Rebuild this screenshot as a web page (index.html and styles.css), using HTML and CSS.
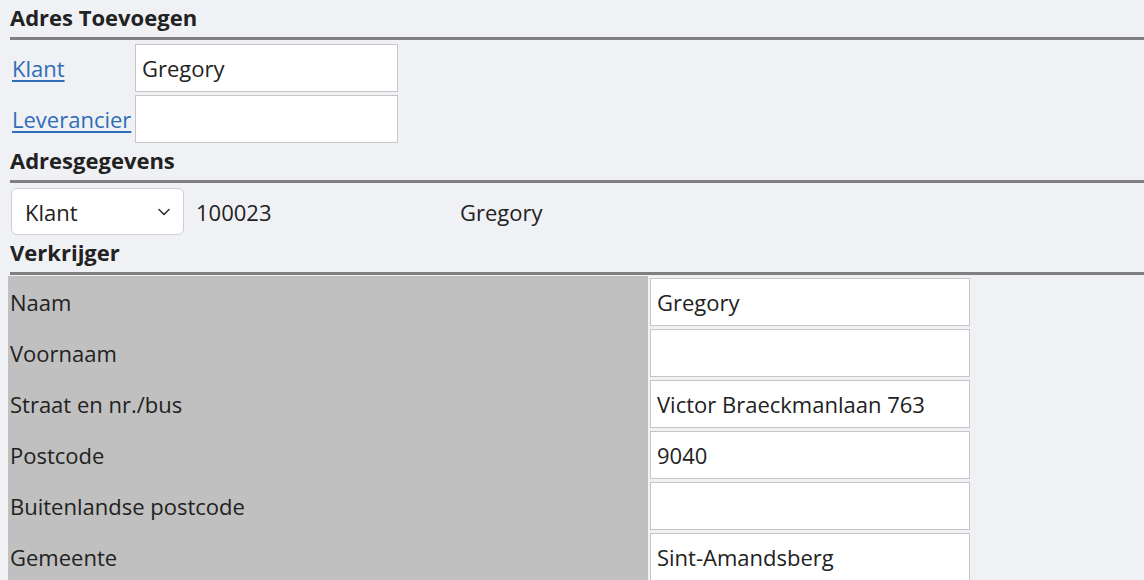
FILE: index.html
```html
<!DOCTYPE html>
<html lang="nl">
<head>
<meta charset="utf-8">
<title>Adres Toevoegen</title>
<link rel="stylesheet" href="styles.css">
</head>
<body>
<div class="page">
  <h2 class="section-title">Adres Toevoegen</h2>
  <table class="lookup">
    <tr>
      <td class="lookup-label"><a href="#" class="link">Klant</a></td>
      <td class="lookup-field"><input class="text-input lookup-input" type="text" value="Gregory"></td>
    </tr>
    <tr>
      <td class="lookup-label"><a href="#" class="link">Leverancier</a></td>
      <td class="lookup-field"><input class="text-input lookup-input" type="text" value=""></td>
    </tr>
  </table>

  <h2 class="section-title">Adresgegevens</h2>
  <div class="address-row">
    <div class="select-cell">
      <div class="select">
        <span>Klant</span>
        <svg class="chevron" width="12" height="8" viewBox="0 0 12 8"><path d="M1 1.5 L6 6.5 L11 1.5" fill="none" stroke="#333" stroke-width="1.6" stroke-linecap="round" stroke-linejoin="round"/></svg>
      </div>
    </div>
    <div class="code-cell">100023</div>
    <div class="name-cell">Gregory</div>
  </div>

  <h2 class="section-title">Verkrijger</h2>
  <table class="form-table">
    <tr><td class="form-label">Naam</td><td class="form-field"><input class="text-input form-input" type="text" value="Gregory"></td></tr>
    <tr><td class="form-label">Voornaam</td><td class="form-field"><input class="text-input form-input" type="text" value=""></td></tr>
    <tr><td class="form-label">Straat en nr./bus</td><td class="form-field"><input class="text-input form-input" type="text" value="Victor Braeckmanlaan 763"></td></tr>
    <tr><td class="form-label">Postcode</td><td class="form-field"><input class="text-input form-input" type="text" value="9040"></td></tr>
    <tr><td class="form-label">Buitenlandse postcode</td><td class="form-field"><input class="text-input form-input" type="text" value=""></td></tr>
    <tr><td class="form-label">Gemeente</td><td class="form-field"><input class="text-input form-input" type="text" value="Sint-Amandsberg"></td></tr>
  </table>
</div>
</body>
</html>
```
FILE: styles.css
```css
html, body {
  margin: 0;
  padding: 0;
  background: #f0f1f5;
}
body {
  font-family: "Open Sans", "DejaVu Sans", sans-serif;
  font-size: 22px;
  line-height: 30px;
  color: #222;
  overflow: hidden;
}
.page {
  padding: 1px 0 0 8px;
}
.section-title {
  margin: 0 0 0 2px;
  padding: 1px 0 5px;
  font-size: 22px;
  line-height: 30px;
  font-weight: 700;
  color: #222;
  border-bottom: 3px solid #808080;
}
.lookup {
  border-collapse: separate;
  border-spacing: 0;
  margin-top: 2px;
}
.lookup td {
  padding: 2px 0 1px;
  vertical-align: middle;
}
.lookup-label {
  width: 123px;
  padding-left: 4px !important;
}
.link {
  color: #2f6db8;
  text-decoration: underline;
  text-underline-offset: 3px;
}
.text-input {
  box-sizing: border-box;
  height: 48px;
  margin: 0;
  border: 1px solid #c6c6c6;
  background: #fff;
  font-family: "Open Sans", "DejaVu Sans", sans-serif;
  font-size: 22px;
  color: #222;
  padding: 0 7px 0 6px;
  outline: none;
  display: block;
}
.lookup-input {
  width: 263px;
}
.address-row {
  display: flex;
  align-items: center;
  padding-top: 5px;
  height: 47px;
  margin-bottom: 1px;
}
.select-cell {
  width: 188px;
  padding-left: 3px;
  box-sizing: border-box;
}
.select {
  box-sizing: border-box;
  width: 173px;
  height: 47px;
  border: 1px solid #cfcfcf;
  border-radius: 6px;
  background: #fff;
  display: flex;
  align-items: center;
  justify-content: space-between;
  padding: 0 13px 0 13px;
}
.chevron {
  display: block;
  margin-top: 1px;
}
.code-cell {
  width: 264px;
}
.form-table {
  border-collapse: separate;
  border-spacing: 0;
  margin-top: 1px;
}
.form-label {
  background: #c0c0c0;
  width: 636px;
  padding: 0 2px;
  vertical-align: middle;
  white-space: nowrap;
}
.form-field {
  padding: 2px 2px 1px 2px;
}
.form-input {
  width: 320px;
}
```
